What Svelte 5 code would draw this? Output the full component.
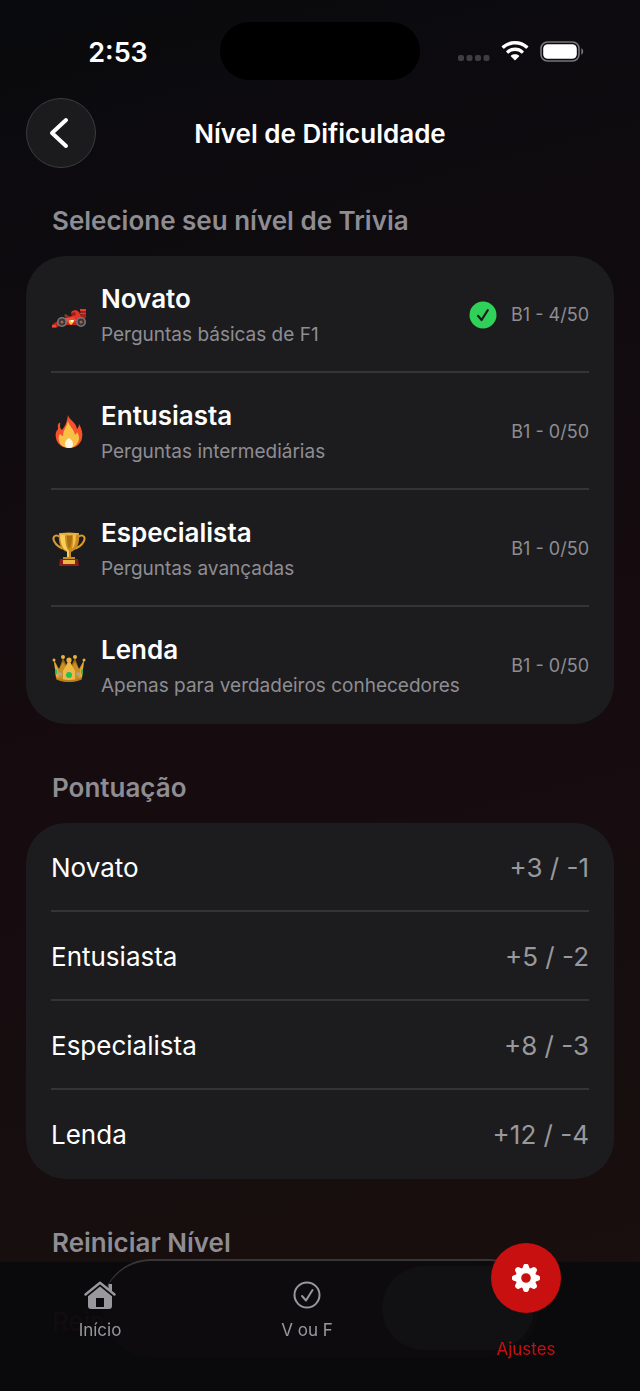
<script>
  const levels = [
    { name: 'Novato', detail: 'Perguntas básicas de F1', icon: 'car', progress: 'B1 - 4/50' },
    { name: 'Entusiasta', detail: 'Perguntas intermediárias', icon: 'fire', progress: 'B1 - 0/50' },
    { name: 'Especialista', detail: 'Perguntas avançadas', icon: 'trophy', progress: 'B1 - 0/50' },
    { name: 'Lenda', detail: 'Apenas para verdadeiros conhecedores', icon: 'crown', progress: 'B1 - 0/50' },
  ];

  const scores = [
    { name: 'Novato', points: '+3 / -1' },
    { name: 'Entusiasta', points: '+5 / -2' },
    { name: 'Especialista', points: '+8 / -3' },
    { name: 'Lenda', points: '+12 / -4' },
  ];

  let selected = $state('Novato');
</script>

<div class="page">
  <!-- Status bar -->
  <div class="status">
    <div class="clock">2:53</div>
    <div class="island"></div>
    <div class="signals">
      <svg width="32" height="6" viewBox="0 0 32 6" fill="#3f3d41" aria-hidden="true">
        <rect width="6" height="6" rx="2" />
        <rect x="8.5" width="6" height="6" rx="2" />
        <rect x="17" width="6" height="6" rx="2" />
        <rect x="25.5" width="6" height="6" rx="2" />
      </svg>
      <svg width="28" height="20" viewBox="0 0 28 20" fill="#fff" aria-hidden="true">
        <path d="M14 0C8.900 0 4.300 1.900.9 5.100q-.5.500 0 1l1.500 1.500q.4.400.9 0C6.200 5 9.900 3.500 14 3.500S21.800 5 24.700 7.600q.5.400.9 0l1.500-1.500q.5-.5 0-1C23.700 1.900 19.100 0 14 0z" />
        <path d="M14 6.600c-3.300 0-6.300 1.200-8.600 3.300q-.5.500 0 1l1.500 1.500q.4.400.9 0c1.700-1.500 3.800-2.300 6.200-2.300s4.500.8 6.200 2.300q.5.400.9 0l1.500-1.500q.5-.5 0-1C20.300 7.800 17.300 6.600 14 6.600z" />
        <path d="M14 13.200c-1.500 0-2.900.5-4 1.400q-.5.500 0 1l3.500 3.500q.5.500 1 0l3.500-3.500q.5-.5 0-1c-1.100-.9-2.500-1.400-4-1.400z" />
      </svg>
      <svg width="44" height="21" viewBox="0 0 44 21" aria-hidden="true">
        <rect x="1" y="1" width="38" height="19" rx="6.5" fill="none" stroke="#77757a" stroke-width="1.6" />
        <rect x="3.2" y="3.2" width="33.6" height="14.6" rx="4.5" fill="#fff" />
        <path d="M41.300 7.200c2.500 1 2.500 5.600 0 6.600z" fill="#77757a" />
      </svg>
    </div>
  </div>

  <header class="topbar">
    <button class="back" type="button" aria-label="Voltar">
      <svg width="20" height="32" viewBox="0 0 20 32" aria-hidden="true">
        <path d="M17 3L3 16l14 13" fill="none" stroke="#fff" stroke-width="4" stroke-linecap="round" stroke-linejoin="round" />
      </svg>
    </button>
    <h1>Nível de Dificuldade</h1>
  </header>

  <main>
    <section>
      <h2>Selecione seu nível de Trivia</h2>
      <div class="card">
        {#each levels as level}
          <button class="level" type="button" aria-pressed={selected === level.name} onclick={() => (selected = level.name)}>
            <span class="emoji">
              {#if level.icon === 'car'}
                <svg width="36" height="36" viewBox="0 0 36 36" aria-hidden="true">
                  <path d="M1 29l1-2 5-3 6-3 7-2 3-1 8 1 3 4v5H14l-6 1-3 2H1z" fill="#cf2318" />
                  <path d="M29 12h6v9l-3 1-2-2z" fill="#a52219" />
                  <path d="M29 12h6v2h-6zM29 16h6v1h-6z" fill="#e8382c" />
                  <path d="M20 16l1-2 4-1 3 2 2 4-2 3-6-1z" fill="#e3342a" />
                  <path d="M20 16l4-1 1 3-4 1z" fill="#96201a" />
                  <path d="M13 18l2-1 3 2-1 2-3-1z" fill="#7a3a1e" />
                  <path d="M6 25l8-4 8-1 4 3-4 3-7-1z" fill="#f0483c" />
                  <path d="M18 23h5l-1 3-2 2-2-2z" fill="#f6c744" />
                  <path d="M20 23h3l-1 2h-2z" fill="#fff" />
                  <path d="M1 28h4v2H1z" fill="#f0483c" />
                  <circle cx="11" cy="25" r="5" fill="#77787c" />
                  <circle cx="11" cy="25" r="3.400" fill="#39373b" />
                  <circle cx="11" cy="25" r="1.500" fill="#a7653a" />
                  <circle cx="30" cy="25" r="5" fill="#77787c" />
                  <circle cx="30" cy="25" r="3.400" fill="#39373b" />
                  <circle cx="30" cy="25" r="1.500" fill="#a7653a" />
                </svg>
              {:else if level.icon === 'fire'}
                <svg width="36" height="36" viewBox="0 0 36 36" aria-hidden="true">
                  <path d="M17 1c1 5 8 7 9 14 1-1 2-3 2-5 3 5 4 10 3 14-1 6-6 10-13 10S6 30 5 24c-1-4 0-7 2-9 0-2-1-4 1-6 2-1 1 1 1 3 0 2 1 3 2 4C15 11 16 7 17 1z" fill="#f4512c" />
                  <path d="M17 7c1 5 6 8 7 14 1-1 2-2 2-3 2 3 3 7 1 10-2 4-5 6-9 6-5 0-9-3-10-7-1-3 0-6 1-7 1 1 2 2 3 2 0-6 4-9 5-15z" fill="#f8c145" />
                  <path d="M18 24c3 2 4 4 4 6 0 3-2 4-4 4s-4-1-4-4c0-2 1-4 4-6z" fill="#fff5e2" />
                </svg>
              {:else if level.icon === 'trophy'}
                <svg width="36" height="36" viewBox="0 0 36 36" aria-hidden="true">
                  <path d="M9 6C5 3 1 5 3 10c2 4 6 7 11 8M27 6c4-3 8-1 6 4-2 4-6 7-11 8" fill="none" stroke="#d99a2b" stroke-width="2" />
                  <path d="M8 2h20c1 10-2 17-8 19v5h4v3H12v-3h4v-5C10 19 7 12 8 2z" fill="#c98a20" />
                  <path d="M9 3h5c0 8 1 14 4 17v6h-2v-6c-5-2-7-9-7-17z" fill="#f9cf5b" />
                  <path d="M16 3h5c0 8-1 12-3 15-2-4-2-9-2-15z" fill="#a8700d" />
                  <path d="M22 3h3c0 7-1 12-4 15 1-5 1-9 1-15z" fill="#f4bd45" />
                  <ellipse cx="18" cy="3" rx="10" ry="1.500" fill="#e5b044" />
                  <path d="M9 28h18l1 7H8z" fill="#8e1c17" />
                  <path d="M12 29h12v4H12z" fill="#eab646" />
                </svg>
              {:else}
                <svg width="36" height="36" viewBox="0 0 36 36" aria-hidden="true">
                  <path d="M7 24l5-14 5 10h2l5-10 5 14v7H7z" fill="#9c6a12" />
                  <path d="M3 12l5 9 4-7 3 5 3-8 3 8 3-5 4 7 5-9-2 18c-5 5-21 5-26 0z" fill="#c98f24" />
                  <path d="M18 12l6 11v9H12v-9z" fill="#f0b945" />
                  <path d="M3 12l4 10 1 8-3-1zM33 12l-4 10-1 8 3-1z" fill="#e3ab3a" />
                  <path d="M5 29c7 4 19 4 26 0v2c-5 4-21 4-26 0z" fill="#b97e1c" />
                  <g fill="#e9b23d">
                    <circle cx="3" cy="12" r="1.500" /><circle cx="12" cy="9" r="2" /><circle cx="18" cy="12" r="2.600" />
                    <circle cx="24" cy="9" r="2" /><circle cx="33" cy="12" r="1.500" />
                  </g>
                  <circle cx="18" cy="27" r="3" fill="#1fbf5c" />
                  <circle cx="9" cy="26" r="1.800" fill="#a6a6ae" />
                  <circle cx="27" cy="26" r="1.800" fill="#a6a6ae" />
                  <path d="M4 21l2 1v4l-2-1zM32 21l-2 1v4l2-1z" fill="#1fbf5c" />
                </svg>
              {/if}
            </span>
            <span class="info">
              <span class="name">{level.name}</span>
              <span class="detail">{level.detail}</span>
            </span>
            {#if selected === level.name}
              <svg class="check" width="28" height="28" viewBox="0 0 28 28" aria-hidden="true">
                <circle cx="14" cy="14" r="13.5" fill="#30d158" />
                <path d="M9 14.800l3.600 4.200 6.200-9.800" fill="none" stroke="#1c1c1e" stroke-width="2.200" stroke-linecap="round" stroke-linejoin="round" />
              </svg>
            {/if}
            <span class="progress">{level.progress}</span>
          </button>
        {/each}
      </div>
    </section>

    <section>
      <h2>Pontuação</h2>
      <dl class="card">
        {#each scores as score}
          <div class="score">
            <dt>{score.name}</dt>
            <dd>{score.points}</dd>
          </div>
        {/each}
      </dl>
    </section>

    <section>
      <h2>Reiniciar Nível</h2>
      <button class="reset" type="button">Reiniciar Nível {selected}</button>
    </section>
  </main>

  <nav class="tabs">
    <div class="glass"></div>
    <a class="tab" href="#inicio">
      <svg width="32" height="28" viewBox="0 0 32 28" aria-hidden="true">
        <path d="M1.500 13.500L16 1.800l14.500 11.700" fill="none" stroke="#98989d" stroke-width="2.400" stroke-linecap="round" stroke-linejoin="round" />
        <path d="M24.500 3h3.500v8l-3.500-3z" fill="#98989d" />
        <path d="M16 5.500l12 9.700V25q0 3-3 3H7q-3 0-3-3v-9.800zM12 17v9h8v-9z" fill="#98989d" fill-rule="evenodd" />
      </svg>
      <span>Início</span>
    </a>
    <a class="tab" href="#vouf">
      <svg width="28" height="28" viewBox="0 0 28 28" fill="none" stroke="#98989d" stroke-width="2" aria-hidden="true">
        <circle cx="14" cy="14" r="12.5" />
        <path d="M9 15l4 4.500 6.500-10.500" stroke-linecap="round" stroke-linejoin="round" />
      </svg>
      <span>V ou F</span>
    </a>
    <a class="tab active" href="#ajustes" aria-current="page">
      <span class="bubble">
        <svg width="28" height="28" viewBox="-14 -14 28 28" aria-hidden="true">
          <g fill="#fff">
            {#each [0, 45, 90, 135, 180, 225, 270, 315] as angle}
              <path d="M-4.200-8l1.600-4.600q.5-1.400 1.600-1.400h2q1.100 0 1.600 1.400L4.200-8z" transform="rotate({angle})" />
            {/each}
            <path d="M0-10.300a10.300 10.300 0 100 20.600 10.300 10.300 0 100-20.600zM0-4.800a4.800 4.800 0 110 9.600 4.800 4.800 0 110-9.600z" fill-rule="evenodd" />
          </g>
        </svg>
      </span>
      <span>Ajustes</span>
    </a>
  </nav>
</div>

<style>
  :global(body) {
    margin: 0;
    background: #0a0b0d;
  }

  .page {
    box-sizing: border-box;
    min-height: 100vh;
    padding: 22px 26px 16px;
    background: linear-gradient(165deg, #090a0d 0%, #0e0b0f 18%, #160b0f 50%, #160e0f 75%, #1c0e0e 100%);
    color: #fff;
    font-family: Inter, 'Liberation Sans', sans-serif;
  }

  button {
    border: 0;
    margin: 0;
    padding: 0;
    background: none;
    color: inherit;
    font: inherit;
    text-align: left;
  }

  h1,
  h2,
  dl,
  dd {
    margin: 0;
  }

  svg {
    display: block;
    flex: none;
  }

  /* Status bar */
  .status {
    display: grid;
    grid-template-columns: 1fr 200px 1fr;
    align-items: center;
    height: 58px;
  }

  .clock {
    padding: 2px 10px 0 0;
    text-align: center;
    font-size: 27px;
    font-weight: 600;
  }

  .island {
    height: 58px;
    border-radius: 29px;
    background: #000;
  }

  .signals {
    display: flex;
    align-items: center;
    justify-content: flex-end;
    gap: 11px;
    padding-right: 30px;
  }

  .signals svg:first-child {
    margin-top: 14px;
  }

  /* Header */
  .topbar {
    display: grid;
    grid-template-columns: 70px 1fr 70px;
    align-items: center;
    margin-top: 18px;
  }

  .back {
    box-sizing: border-box;
    display: flex;
    align-items: center;
    justify-content: center;
    height: 70px;
    padding-right: 4px;
    border: 1px solid #3c3c3f;
    border-radius: 50%;
    background: #1b1b1d;
  }

  h1 {
    padding-top: 2px;
    text-align: center;
    font-size: 26px;
    font-weight: 600;
    line-height: 32px;
  }

  /* Sections */
  main {
    padding-top: 37px;
  }

  section {
    margin-bottom: 48px;
  }

  section:last-child {
    margin-bottom: 0;
  }

  h2 {
    margin-bottom: 19px;
    padding: 0 26px;
    color: #8e8d93;
    font-size: 26px;
    font-weight: 600;
    line-height: 32px;
  }

  .card {
    padding: 0 25px;
    border-radius: 40px;
    background: #1c1c1e;
  }

  .level,
  .score {
    box-sizing: border-box;
    display: flex;
    align-items: center;
    width: 100%;
    padding-top: 2px;
    border-bottom: 2px solid #343436;
  }

  .level:last-child,
  .score:last-child {
    border-bottom-color: transparent;
  }

  .level {
    height: 117px;
  }

  .emoji {
    width: 50px;
  }

  .info {
    display: flex;
    flex: 1;
    flex-direction: column;
    gap: 8px;
  }

  .name {
    font-size: 26px;
    font-weight: 600;
    line-height: 32px;
  }

  .detail {
    color: #8e8d93;
    font-size: 19px;
    line-height: 24px;
  }

  .check {
    margin-right: 14px;
  }

  .progress {
    color: #8e8d93;
    font-size: 18px;
  }

  .score {
    justify-content: space-between;
    height: 89px;
    font-size: 26px;
  }

  .score dd {
    color: #98989d;
  }

  .reset {
    width: 100%;
    padding: 0 26px;
    color: #ff453a;
    font-size: 26px;
    line-height: 88px;
  }

  /* Tab bar */
  .tabs {
    position: fixed;
    right: 0;
    bottom: 0;
    left: 0;
    box-sizing: border-box;
    display: grid;
    grid-template-columns: 200fr 214fr 224fr;
    height: 129px;
    padding: 19px 2px 0 0;
    background: rgba(10, 10, 13, 0.97);
  }

  .glass {
    position: absolute;
    top: -3px;
    left: 102px;
    right: 102px;
    height: 98px;
    border-radius: 49px;
    background: #0d0b0e;
    box-shadow: inset 0 3px 0 -1px #363638;
  }

  /* Lighter highlight behind the active tab */
  .glass::after {
    content: '';
    position: absolute;
    top: 7px;
    right: 4px;
    width: 152px;
    height: 84px;
    border-radius: 42px;
    background: #111113;
  }

  .tab {
    position: relative;
    display: flex;
    flex-direction: column;
    align-items: center;
    gap: 9px;
    color: #98989d;
    font-size: 17px;
    line-height: 24px;
    text-decoration: none;
  }

  .active {
    margin-top: -38px;
    gap: 24px;
    color: #c81010;
  }

  .bubble {
    display: flex;
    align-items: center;
    justify-content: center;
    width: 70px;
    height: 70px;
    border-radius: 50%;
    background: #c81010;
  }
</style>
